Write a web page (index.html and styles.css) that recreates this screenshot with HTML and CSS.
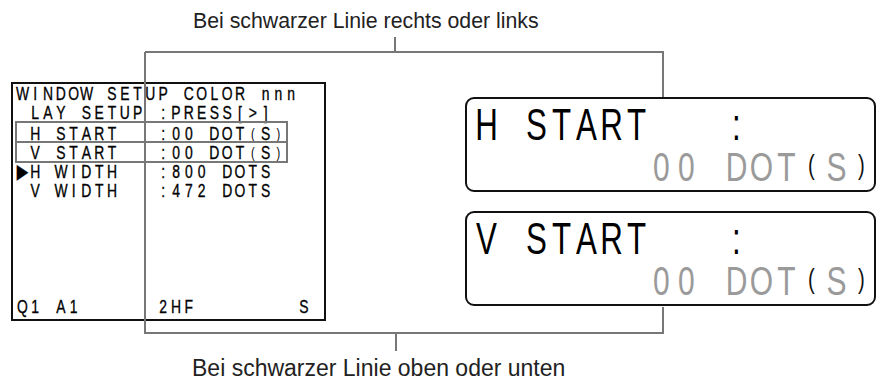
FILE: index.html
```html
<!DOCTYPE html>
<html lang="de">
<head>
    <meta charset="UTF-8">
    <meta name="viewport" content="width=device-width, initial-scale=1.0">
    <title>Window Setup</title>
    <link rel="stylesheet" href="styles.css">
</head>
<body>

    <p class="caption caption-top">Bei schwarzer Linie rechts oder links</p>

    <div class="stage">
        <div class="lcd">
            <div class="cells">WINDOW SETUP COLOR nnn</div>
            <div class="cells"> LAY SETUP :PRESS[&gt;]</div>
            <div class="cells row-boxed"> H START   :00 DOT<span class="paren">(</span>S<span class="paren">)</span></div>
            <div class="cells"> V START   :00 DOT<span class="paren">(</span>S<span class="paren">)</span></div>
            <div class="cells"><span class="arrow">▶</span>H WIDTH   :800 DOTS</div>
            <div class="cells"> V WIDTH   :472 DOTS</div>
            <div class="cells lcd-footer">Q1 A1      2HF        S</div>
            <div class="highlight"></div>
        </div>

        <div class="panels">
            <div class="panel">
                <div class="cells panel-label">H START   :</div>
                <div class="cells panel-value">       00 DOT<span class="paren">(</span>S<span class="paren">)</span></div>
            </div>
            <div class="panel">
                <div class="cells panel-label">V START   :</div>
                <div class="cells panel-value">       00 DOT<span class="paren">(</span>S<span class="paren">)</span></div>
            </div>
        </div>
    </div>

    <p class="caption caption-bottom">Bei schwarzer Linie oben oder unten</p>

    <svg class="leaders" width="876" height="380" viewBox="0 0 876 380">
        <path d="M395 37V52M145 52H663V97M663 307V333H145V52M396 333V351" />
    </svg>

    <script>
        // cada caracter en su propia celda, como en la pantalla LCD
        function partirCeldas(fila) {
            const partes = [];
            fila.childNodes.forEach(nodo => {
                const clase = nodo.nodeType === 1 ? nodo.className : '';
                for (const ch of nodo.textContent) {
                    partes.push([ch, clase]);
                }
            });
            fila.textContent = '';
            partes.forEach(([ch, clase]) => {
                const celda = document.createElement('span');
                celda.className = clase ? 'cell ' + clase : 'cell';
                celda.textContent = ch;
                fila.appendChild(celda);
            });
        }

        document.querySelectorAll('.cells').forEach(partirCeldas);
    </script>

</body>
</html>
```

FILE: styles.css
```css
body {
    margin: 0;
    width: 876px;
    height: 380px;
    overflow: hidden;
    position: relative;
    font-family: "Liberation Sans", Arial, sans-serif;
    color: #000;
    background-color: #fff;
}
.caption {
    margin: 0;
    color: #222;
    white-space: nowrap;
}
.caption-top {
    font-size: 21.3px;
    line-height: 24px;
    padding: 9px 0 0 193px;
}
.caption-bottom {
    font-size: 23px;
    line-height: 26px;
    padding: 34px 0 0 192px;
}
.stage {
    display: flex;
    align-items: flex-start;
}
.lcd {
    position: relative;
    box-sizing: border-box;
    width: 315px;
    height: 239px;
    margin: 49px 0 0 11px;
    padding: 0 0 3.5px 3px;
    border: 2px solid #111;
    display: flex;
    flex-direction: column;
}
.cells {
    white-space: nowrap;
    transform-origin: 0 0;
}
.cell {
    display: inline-block;
    text-align: center;
    white-space: pre;
    vertical-align: top;
}
.lcd .cells {
    font-size: 18.8px;
    line-height: 19px;
    height: 19px;
    transform: scaleX(.74);
    -webkit-text-stroke: 0.35px #000;
}
.lcd .cell {
    width: 17.3px;
}
.lcd .paren {
    font-size: 15px;
    -webkit-text-stroke: 0;
}
.arrow {
    font-family: "DejaVu Sans", sans-serif;
    font-size: 20px;
    line-height: 19px;
}
.row-boxed {
    margin-top: 2.4px;
}
.lcd-footer {
    margin-top: auto;
}
.highlight {
    position: absolute;
    left: 2px;
    top: 37px;
    width: 269px;
    height: 38px;
    border: 2px solid #777;
}
.highlight::after {
    content: "";
    position: absolute;
    left: 0;
    right: 0;
    top: 18px;
    height: 2px;
    background-color: #777;
}
.panels {
    display: flex;
    flex-direction: column;
    gap: 19px;
    margin: 64px 0 0 139px;
}
.panel {
    box-sizing: border-box;
    width: 411px;
    height: 95px;
    padding: 4px 0 0 7px;
    border: 2px solid #111;
    border-radius: 9px;
    background-color: #fff;
}
.panel-label {
    font-size: 44.7px;
    line-height: 44px;
    height: 44px;
    transform: scaleX(.7);
}
.panel-label .cell {
    width: 35.71px;
}
.panel-value {
    font-size: 40px;
    line-height: 40px;
    height: 40px;
    color: #9a9a9a;
    transform: scaleX(.75);
}
.panel-value .cell {
    width: 33.33px;
}
.panel-value .paren {
    color: #111;
    font-size: 27px;
    line-height: 36px;
}
.leaders {
    position: absolute;
    top: 0;
    left: 0;
    pointer-events: none;
}
.leaders path {
    fill: none;
    stroke: #777;
    stroke-width: 2;
}
```
